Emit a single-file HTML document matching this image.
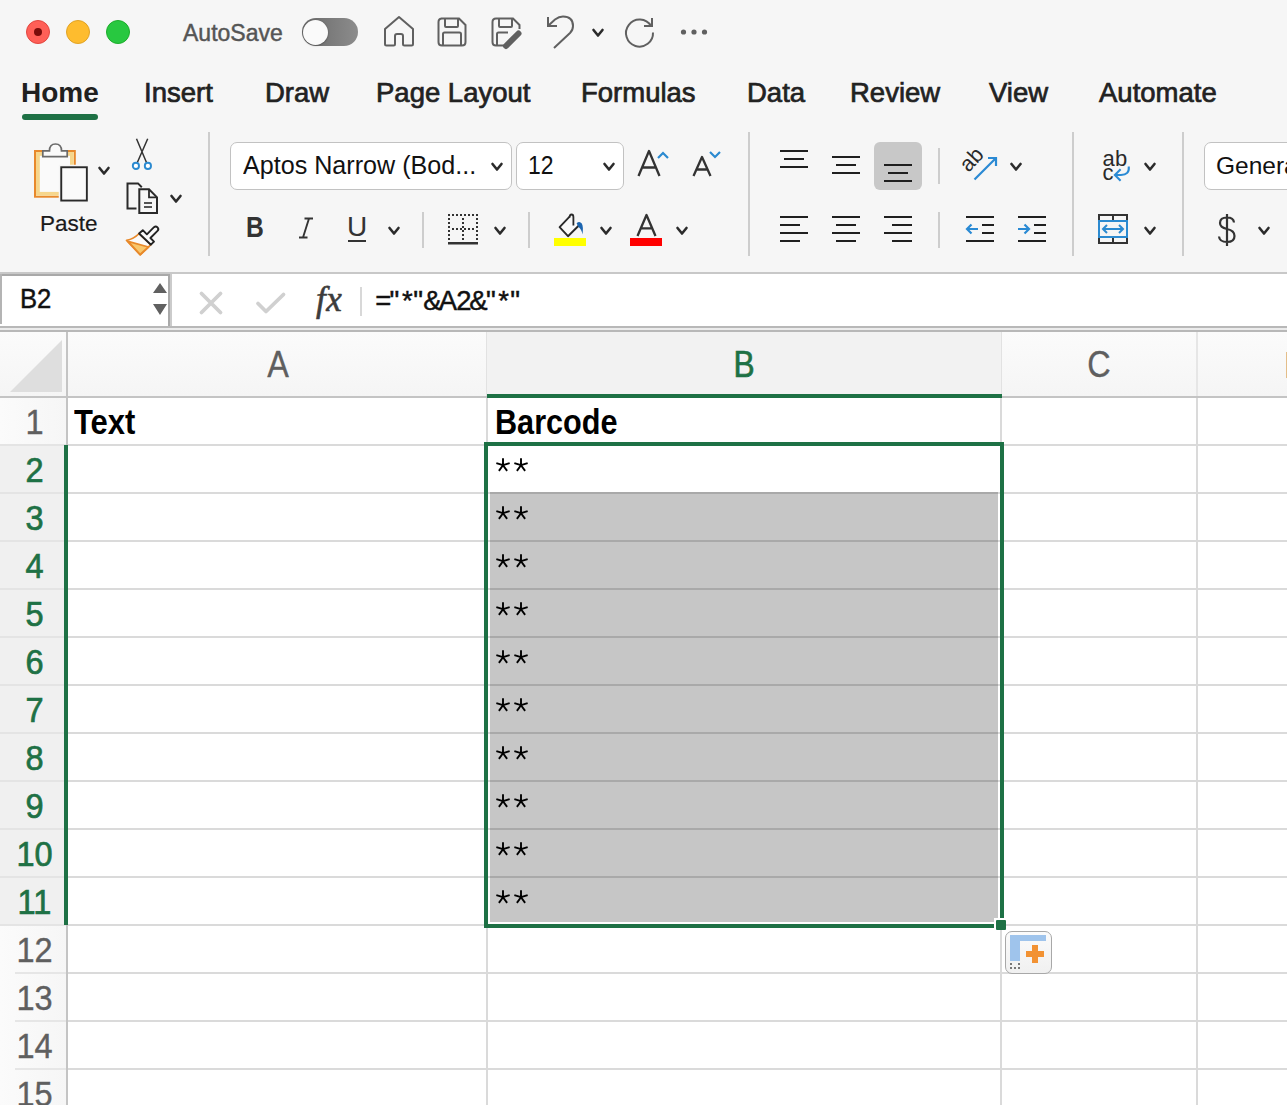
<!DOCTYPE html>
<html><head><meta charset="utf-8">
<style>
*{box-sizing:border-box}
html,body{margin:0;padding:0}
body{width:1287px;height:1105px;overflow:hidden;position:relative;background:#f6f6f6;font-family:"Liberation Sans",sans-serif}
.a{position:absolute}
.t{position:absolute;line-height:1;white-space:nowrap}
.m{-webkit-text-stroke:0.45px currentColor}
.tab{-webkit-text-stroke:0.7px currentColor}
.hl{position:absolute;height:2px;background:#dadada}
.vl{position:absolute;width:2px;background:#dadada}
.rn{position:absolute;left:0;width:69px;text-align:center;font-size:35px;line-height:1;color:#5f5f5f;transform:scaleX(.93);-webkit-text-stroke:0.4px #5f5f5f}
.rn.g{color:#1e7145;-webkit-text-stroke:0.7px #1e7145}
.ast{position:absolute;left:495px;font-size:30px;line-height:1;color:#111}
</style></head>
<body>
<!-- ============ TITLE BAR ============ -->
<div class="a" style="left:26px;top:20px;width:24px;height:24px;border-radius:50%;background:#ff5f57;border:1px solid #e2463f"></div>
<div class="a" style="left:34px;top:28px;width:8px;height:8px;border-radius:50%;background:#7a0c0a"></div>
<div class="a" style="left:66px;top:20px;width:24px;height:24px;border-radius:50%;background:#febc2e;border:1px solid #e1a325"></div>
<div class="a" style="left:106px;top:20px;width:24px;height:24px;border-radius:50%;background:#28c840;border:1px solid #1dad2b"></div>
<div class="t m" style="left:183px;top:22px;font-size:23px;color:#555">AutoSave</div>
<div class="a" style="left:302px;top:18px;width:56px;height:28px;border-radius:14px;background:linear-gradient(90deg,#6a6a6a,#8c8c8c)"></div>
<div class="a" style="left:303px;top:20px;width:25px;height:25px;border-radius:50%;background:#fafafa;box-shadow:0 0.5px 2px rgba(0,0,0,.4)"></div>

<!-- ============ TABS ============ -->
<div class="t" style="left:21px;top:79px;font-size:28px;font-weight:bold;color:#202020">Home</div>
<div class="a" style="left:22px;top:114px;width:76px;height:6px;border-radius:3px;background:#1e7145"></div>
<div class="t tab" style="left:144px;top:79px;font-size:27.5px;color:#222">Insert</div>
<div class="t tab" style="left:265px;top:79px;font-size:27.5px;color:#222">Draw</div>
<div class="t tab" style="left:376px;top:79px;font-size:27.5px;color:#222">Page Layout</div>
<div class="t tab" style="left:581px;top:79px;font-size:27.5px;color:#222">Formulas</div>
<div class="t tab" style="left:747px;top:79px;font-size:27.5px;color:#222">Data</div>
<div class="t tab" style="left:850px;top:79px;font-size:27.5px;color:#222">Review</div>
<div class="t tab" style="left:989px;top:79px;font-size:27.5px;color:#222">View</div>
<div class="t tab" style="left:1099px;top:79px;font-size:27.5px;color:#222">Automate</div>

<!-- ============ RIBBON ============ -->
<!-- Paste -->
<svg class="a" style="left:30px;top:138px" width="64" height="68" viewBox="0 0 64 68">
  <rect x="5" y="13" width="39.8" height="45.7" fill="#fafafa" stroke="#e8892c" stroke-width="2"/>
  <rect x="7.9" y="15.9" width="34" height="39.9" fill="none" stroke="#f6d68c" stroke-width="3.8"/>
  <path d="M12.8 18.7 V12.8 H19.5 Q19.5 6 25.5 6 Q31.5 6 31.5 12.8 H37.2 V18.7 Z" fill="#fafafa" stroke="#6b6b6b" stroke-width="1.7"/>
  <rect x="31.25" y="29.25" width="25.6" height="33.3" fill="#fafafa" stroke="#f5f5f5" stroke-width="5"/>
  <rect x="31.25" y="29.25" width="25.6" height="33.3" fill="#fafafa" stroke="#2a2a2a" stroke-width="1.9"/>
</svg>
<svg class="a" style="left:96px;top:164px" width="16" height="14"><path d="M3.5 4 L8 9.5 L12.5 4" fill="none" stroke="#2b2b2b" stroke-width="2.6" stroke-linecap="round" stroke-linejoin="round"/></svg>
<div class="t" style="left:40px;top:213px;font-size:22.5px;color:#1a1a1a;-webkit-text-stroke:0.2px #1a1a1a">Paste</div>
<!-- scissors -->
<svg class="a" style="left:128px;top:136px" width="28" height="36" viewBox="0 0 28 36">
  <path d="M8.5 2.8 L18.6 26.8 M19.7 2.8 L9.2 26.8" stroke="#333" stroke-width="1.5" fill="none"/>
  <circle cx="7.9" cy="29.9" r="3.1" fill="#fff" stroke="#2b8ad0" stroke-width="1.9"/>
  <circle cx="19.9" cy="29.9" r="3.1" fill="#fff" stroke="#2b8ad0" stroke-width="1.9"/>
</svg>
<!-- copy -->
<svg class="a" style="left:124px;top:180px" width="38" height="38" viewBox="0 0 38 38">
  <path d="M12.5 28.5 H3.5 V3.4 H14 L17.8 7.2" fill="none" stroke="#2a2a2a" stroke-width="2"/>
  <path d="M15.3 9.3 H25 L33 17.3 V32.9 H15.3 Z" fill="#f7f7f7" stroke="#2a2a2a" stroke-width="2"/>
  <path d="M25 9.3 V17.3 H33" fill="none" stroke="#2a2a2a" stroke-width="1.8"/>
  <path d="M20 23 H28 M20 27 H28" stroke="#555" stroke-width="1.8"/>
</svg>
<svg class="a" style="left:168px;top:192px" width="16" height="14"><path d="M3.5 4 L8 9.5 L12.5 4" fill="none" stroke="#2b2b2b" stroke-width="2.6" stroke-linecap="round" stroke-linejoin="round"/></svg>
<!-- format painter -->
<svg class="a" style="left:124px;top:224px" width="38" height="34" viewBox="0 0 38 34">
  <path d="M2.6 16.4 Q10 14.8 15.1 9.5 L26.9 20.7 L16.2 30.8 Z" fill="#fafafa" stroke="#e8892a" stroke-width="1.8" stroke-linejoin="round"/>
  <path d="M4 17.4 L24.5 23 L16.2 30.5 Z" fill="#f8c76c" stroke="#e8892a" stroke-width="1.8" stroke-linejoin="round"/>
  <path d="M15.1 9.5 L18.8 6.2 L22.9 10.3 L30 3.2 Q31.8 1.6 33.5 3.4 Q35.2 5.2 33.5 6.9 L26.4 14 L30 17.6 L26.9 20.7 Z" fill="#fafafa" stroke="#222" stroke-width="1.9" stroke-linejoin="round"/>
</svg>
<!-- separators -->
<div class="a" style="left:208px;top:132px;width:2px;height:124px;background:#cdcdcd"></div>
<div class="a" style="left:748px;top:132px;width:2px;height:124px;background:#cdcdcd"></div>
<div class="a" style="left:1072px;top:132px;width:2px;height:124px;background:#cdcdcd"></div>
<div class="a" style="left:1182px;top:132px;width:2px;height:124px;background:#cdcdcd"></div>
<div class="a" style="left:422px;top:212px;width:2px;height:36px;background:#cdcdcd"></div>
<div class="a" style="left:528px;top:212px;width:2px;height:36px;background:#cdcdcd"></div>
<div class="a" style="left:938px;top:148px;width:2px;height:36px;background:#cdcdcd"></div>
<div class="a" style="left:938px;top:212px;width:2px;height:36px;background:#cdcdcd"></div>

<!-- font name / size -->
<div class="a" style="left:230px;top:142px;width:282px;height:48px;border:1px solid #c2c2c2;border-radius:7px;background:#fff"></div>
<div class="t" style="left:243px;top:153px;font-size:25.5px;color:#111;transform:scaleX(.985);transform-origin:0 0">Aptos Narrow (Bod...</div>
<svg class="a" style="left:489px;top:160px" width="16" height="14"><path d="M3.5 4 L8 9.5 L12.5 4" fill="none" stroke="#2b2b2b" stroke-width="2.6" stroke-linecap="round" stroke-linejoin="round"/></svg>
<div class="a" style="left:516px;top:142px;width:108px;height:48px;border:1px solid #c2c2c2;border-radius:7px;background:#fff"></div>
<div class="t" style="left:528px;top:153px;font-size:25.5px;color:#111;transform:scaleX(.9);transform-origin:0 0">12</div>
<svg class="a" style="left:601px;top:160px" width="16" height="14"><path d="M3.5 4 L8 9.5 L12.5 4" fill="none" stroke="#2b2b2b" stroke-width="2.6" stroke-linecap="round" stroke-linejoin="round"/></svg>
<!-- grow/shrink font -->
<svg class="a" style="left:634px;top:146px" width="30" height="34"><path d="M4.5 30 L15 5 L25.5 30 M8 21.5 H22" fill="none" stroke="#333" stroke-width="2.3" stroke-linejoin="round"/></svg>
<svg class="a" style="left:656px;top:149px" width="14" height="12"><path d="M2 9 L7 4 L12 9" fill="none" stroke="#2b8ad0" stroke-width="2.2"/></svg>
<svg class="a" style="left:690px;top:152px" width="24" height="28"><path d="M3.5 24 L12 5 L20.5 24 M6.3 17.5 H17.7" fill="none" stroke="#333" stroke-width="2.3" stroke-linejoin="round"/></svg>
<svg class="a" style="left:708px;top:148px" width="14" height="12"><path d="M2 4 L7 9 L12 4" fill="none" stroke="#2b8ad0" stroke-width="2.2"/></svg>

<!-- B I U -->
<div class="t" style="left:246px;top:213px;font-size:29px;font-weight:bold;color:#333;transform:scaleX(.85);transform-origin:0 0">B</div>
<svg class="a" style="left:296px;top:215px" width="20" height="26"><path d="M13 3.5 L7 22.5 M8.5 3.5 H17 M3 22.5 H11.5" fill="none" stroke="#333" stroke-width="1.9"/></svg>
<div class="t" style="left:347px;top:213px;font-size:28px;color:#333">U</div>
<div class="a" style="left:348px;top:240px;width:18px;height:2px;background:#333"></div>
<svg class="a" style="left:386px;top:224px" width="16" height="14"><path d="M3.5 4 L8 9.5 L12.5 4" fill="none" stroke="#2b2b2b" stroke-width="2.6" stroke-linecap="round" stroke-linejoin="round"/></svg>
<!-- borders -->
<svg class="a" style="left:446px;top:212px" width="34" height="34" viewBox="0 0 34 34">
  <g fill="#333">
    <rect x="2" y="2" width="2" height="2"/><rect x="6" y="2" width="2" height="2"/><rect x="10" y="2" width="2" height="2"/><rect x="14" y="2" width="2" height="2"/><rect x="18" y="2" width="2" height="2"/><rect x="22" y="2" width="2" height="2"/><rect x="26" y="2" width="2" height="2"/><rect x="30" y="2" width="2" height="2"/>
    <rect x="2" y="6" width="2" height="2"/><rect x="2" y="10" width="2" height="2"/><rect x="2" y="14" width="2" height="2"/><rect x="2" y="18" width="2" height="2"/><rect x="2" y="22" width="2" height="2"/><rect x="2" y="26" width="2" height="2"/>
    <rect x="30" y="6" width="2" height="2"/><rect x="30" y="10" width="2" height="2"/><rect x="30" y="14" width="2" height="2"/><rect x="30" y="18" width="2" height="2"/><rect x="30" y="22" width="2" height="2"/><rect x="30" y="26" width="2" height="2"/>
    <rect x="16" y="6" width="2" height="2"/><rect x="16" y="10" width="2" height="2"/><rect x="16" y="14" width="2" height="2"/><rect x="16" y="18" width="2" height="2"/><rect x="16" y="22" width="2" height="2"/><rect x="16" y="26" width="2" height="2"/>
    <rect x="6" y="16" width="2" height="2"/><rect x="10" y="16" width="2" height="2"/><rect x="14" y="16" width="2" height="2"/><rect x="18" y="16" width="2" height="2"/><rect x="22" y="16" width="2" height="2"/><rect x="26" y="16" width="2" height="2"/>
    <rect x="2" y="30" width="30" height="2.5"/>
  </g>
</svg>
<svg class="a" style="left:492px;top:224px" width="16" height="14"><path d="M3.5 4 L8 9.5 L12.5 4" fill="none" stroke="#2b2b2b" stroke-width="2.6" stroke-linecap="round" stroke-linejoin="round"/></svg>
<!-- fill color -->
<svg class="a" style="left:552px;top:210px" width="38" height="38" viewBox="0 0 38 38">
  <path d="M17.6 6.6 L7.6 17.2 L16 26.2 L26.6 15.8" fill="#fafafa" stroke="#2a2a2a" stroke-width="1.9" stroke-linejoin="round"/>
  <path d="M17.6 7.5 Q17.6 4.5 19.6 4.5 Q21.4 4.5 21.4 7 V15.5" fill="none" stroke="#2a2a2a" stroke-width="1.8"/>
  <path d="M24.6 13.2 Q27.5 10.5 29.8 13.5 Q31.5 16 30.5 24.5 Q29.5 19 26.5 17 Z" fill="#1c65b0"/>
  <rect x="2" y="28" width="32" height="8" fill="#ffff00"/>
</svg>
<svg class="a" style="left:598px;top:224px" width="16" height="14"><path d="M3.5 4 L8 9.5 L12.5 4" fill="none" stroke="#2b2b2b" stroke-width="2.6" stroke-linecap="round" stroke-linejoin="round"/></svg>
<!-- font color -->
<svg class="a" style="left:634px;top:211px" width="26" height="28"><path d="M3.5 25 L12.5 4 L21.5 25 M6.8 17.3 H18.2" fill="none" stroke="#333" stroke-width="2.3" stroke-linejoin="round"/></svg>
<div class="a" style="left:630px;top:238px;width:32px;height:8px;background:#f00"></div>
<svg class="a" style="left:674px;top:224px" width="16" height="14"><path d="M3.5 4 L8 9.5 L12.5 4" fill="none" stroke="#2b2b2b" stroke-width="2.6" stroke-linecap="round" stroke-linejoin="round"/></svg>

<!-- alignment row 1 -->
<div class="a" style="left:780px;top:150px;width:28px;height:2px;background:#1f1f1f"></div>
<div class="a" style="left:784px;top:158px;width:20px;height:2px;background:#1f1f1f"></div>
<div class="a" style="left:780px;top:166px;width:28px;height:2px;background:#1f1f1f"></div>
<div class="a" style="left:832px;top:156px;width:28px;height:2px;background:#1f1f1f"></div>
<div class="a" style="left:836px;top:164px;width:20px;height:2px;background:#1f1f1f"></div>
<div class="a" style="left:832px;top:172px;width:28px;height:2px;background:#1f1f1f"></div>
<div class="a" style="left:874px;top:142px;width:48px;height:48px;border-radius:6px;background:#c8c8c8"></div>
<div class="a" style="left:884px;top:164px;width:28px;height:2px;background:#1f1f1f"></div>
<div class="a" style="left:888px;top:172px;width:20px;height:2px;background:#1f1f1f"></div>
<div class="a" style="left:884px;top:180px;width:28px;height:2px;background:#1f1f1f"></div>
<!-- orientation -->
<svg class="a" style="left:960px;top:148px" width="40" height="34" viewBox="0 0 40 34">
  <text x="0" y="0" font-family="Liberation Sans" font-size="21.5" fill="#2a2a2a" transform="translate(8.5 25) rotate(-47)">ab</text>
  <path d="M14.5 31.5 L36 10 M28 10 H36 V18" fill="none" stroke="#2a8ad4" stroke-width="2.2"/>
</svg>
<svg class="a" style="left:1008px;top:160px" width="16" height="14"><path d="M3.5 4 L8 9.5 L12.5 4" fill="none" stroke="#2b2b2b" stroke-width="2.6" stroke-linecap="round" stroke-linejoin="round"/></svg>
<!-- alignment row 2 -->
<div class="a" style="left:780px;top:216px;width:28px;height:2px;background:#1f1f1f"></div>
<div class="a" style="left:780px;top:224px;width:20px;height:2px;background:#1f1f1f"></div>
<div class="a" style="left:780px;top:232px;width:28px;height:2px;background:#1f1f1f"></div>
<div class="a" style="left:780px;top:240px;width:20px;height:2px;background:#1f1f1f"></div>
<div class="a" style="left:832px;top:216px;width:28px;height:2px;background:#1f1f1f"></div>
<div class="a" style="left:836px;top:224px;width:20px;height:2px;background:#1f1f1f"></div>
<div class="a" style="left:832px;top:232px;width:28px;height:2px;background:#1f1f1f"></div>
<div class="a" style="left:836px;top:240px;width:20px;height:2px;background:#1f1f1f"></div>
<div class="a" style="left:884px;top:216px;width:28px;height:2px;background:#1f1f1f"></div>
<div class="a" style="left:892px;top:224px;width:20px;height:2px;background:#1f1f1f"></div>
<div class="a" style="left:884px;top:232px;width:28px;height:2px;background:#1f1f1f"></div>
<div class="a" style="left:892px;top:240px;width:20px;height:2px;background:#1f1f1f"></div>
<!-- indent -->
<div class="a" style="left:966px;top:216px;width:28px;height:2px;background:#1f1f1f"></div>
<div class="a" style="left:982px;top:224px;width:12px;height:2px;background:#1f1f1f"></div>
<div class="a" style="left:982px;top:232px;width:12px;height:2px;background:#1f1f1f"></div>
<div class="a" style="left:966px;top:240px;width:28px;height:2px;background:#1f1f1f"></div>
<svg class="a" style="left:964px;top:222px" width="18" height="14"><path d="M3 7 H14 M7.5 2.5 L3 7 L7.5 11.5" fill="none" stroke="#2a8ad4" stroke-width="2.2"/></svg>
<div class="a" style="left:1018px;top:216px;width:28px;height:2px;background:#1f1f1f"></div>
<div class="a" style="left:1034px;top:224px;width:12px;height:2px;background:#1f1f1f"></div>
<div class="a" style="left:1034px;top:232px;width:12px;height:2px;background:#1f1f1f"></div>
<div class="a" style="left:1018px;top:240px;width:28px;height:2px;background:#1f1f1f"></div>
<svg class="a" style="left:1016px;top:222px" width="18" height="14"><path d="M2 7 H13 M8.5 2.5 L13 7 L8.5 11.5" fill="none" stroke="#2a8ad4" stroke-width="2.2"/></svg>
<!-- wrap text -->
<svg class="a" style="left:1098px;top:148px" width="38" height="38" viewBox="0 0 38 38">
  <text x="4.6" y="18" font-family="Liberation Sans" font-size="22" fill="#2a2a2a">a</text>
  <text x="17" y="18" font-family="Liberation Sans" font-size="22" fill="#2a2a2a">b</text>
  <text x="4.6" y="32" font-family="Liberation Sans" font-size="22" fill="#2a2a2a">c</text>
  <path d="M30.8 18.5 Q31.5 27 23 27 H17.5 M22.6 21.3 L16.9 27 L22.6 32.7" fill="none" stroke="#2a8ad4" stroke-width="2.1"/>
</svg>
<svg class="a" style="left:1142px;top:160px" width="16" height="14"><path d="M3.5 4 L8 9.5 L12.5 4" fill="none" stroke="#2b2b2b" stroke-width="2.6" stroke-linecap="round" stroke-linejoin="round"/></svg>
<!-- merge -->
<svg class="a" style="left:1096px;top:212px" width="34" height="34" viewBox="0 0 34 34">
  <rect x="3" y="3" width="28" height="28" fill="none" stroke="#333" stroke-width="2"/>
  <path d="M17 3 V9 M17 25 V31" stroke="#333" stroke-width="2"/>
  <rect x="3" y="9" width="28" height="16" fill="#f5f5f5" stroke="#2b8ad0" stroke-width="2"/>
  <path d="M7 17 H27 M11 13 L7 17 L11 21 M23 13 L27 17 L23 21" fill="none" stroke="#2b8ad0" stroke-width="2"/>
</svg>
<svg class="a" style="left:1142px;top:224px" width="16" height="14"><path d="M3.5 4 L8 9.5 L12.5 4" fill="none" stroke="#2b2b2b" stroke-width="2.6" stroke-linecap="round" stroke-linejoin="round"/></svg>
<!-- number format -->
<div class="a" style="left:1204px;top:142px;width:110px;height:48px;border:1px solid #c2c2c2;border-radius:7px;background:#fff"></div>
<div class="t" style="left:1216px;top:154px;font-size:24.5px;color:#111">General</div>
<svg class="a" style="left:1216px;top:212px" width="22" height="36"><path d="M18 10.5 Q17.5 5.5 11 5.5 Q4 5.5 4 11 Q4 15.5 11 17 Q18.5 18.5 18.5 24 Q18.5 30 11 30 Q3.5 30 3 24.5 M11 2 V34" fill="none" stroke="#333" stroke-width="2.2"/></svg>
<svg class="a" style="left:1256px;top:224px" width="16" height="14"><path d="M3.5 4 L8 9.5 L12.5 4" fill="none" stroke="#2b2b2b" stroke-width="2.6" stroke-linecap="round" stroke-linejoin="round"/></svg>

<!-- quick access icons -->
<svg class="a" style="left:382px;top:14px" width="34" height="34" viewBox="0 0 34 34">
  <path d="M3 15 L17 3 L31 15 V30 Q31 31.5 29.5 31.5 H22.5 Q21 31.5 21 30 V22 Q21 20 19 20 H15 Q13 20 13 22 V30 Q13 31.5 11.5 31.5 H4.5 Q3 31.5 3 30 Z" fill="none" stroke="#606060" stroke-width="2" stroke-linejoin="round"/>
</svg>
<svg class="a" style="left:436px;top:16px" width="32" height="32" viewBox="0 0 32 32">
  <path d="M5 2.5 H23 L29.5 9 V26 Q29.5 29.5 26 29.5 H6 Q2.5 29.5 2.5 26 V6 Q2.5 2.5 6 2.5 Z" fill="none" stroke="#606060" stroke-width="2"/>
  <path d="M9 3 V10 Q9 11 10 11 H21 Q22 11 22 10 V3" fill="none" stroke="#606060" stroke-width="2"/>
  <path d="M7 29 V18 Q7 16.5 8.5 16.5 H23.5 Q25 16.5 25 18 V29" fill="none" stroke="#606060" stroke-width="2"/>
</svg>
<svg class="a" style="left:490px;top:16px" width="34" height="34" viewBox="0 0 34 34">
  <path d="M14 29.5 H6 Q2.5 29.5 2.5 26 V6 Q2.5 2.5 6 2.5 H23 L29.5 9 V13" fill="none" stroke="#606060" stroke-width="2"/>
  <path d="M9 3 V10 Q9 11 10 11 H21 Q22 11 22 10 V3" fill="none" stroke="#606060" stroke-width="2"/>
  <path d="M7 29 V18 Q7 16.5 8.5 16.5 H18" fill="none" stroke="#606060" stroke-width="2"/>
  <path d="M16 30 L28.5 17.5" stroke="#606060" stroke-width="6" stroke-linecap="round"/>
</svg>
<svg class="a" style="left:544px;top:14px" width="34" height="36" viewBox="0 0 34 36">
  <path d="M4 3 V12 H13" fill="none" stroke="#606060" stroke-width="2"/>
  <path d="M4.5 11.5 L11 5.5 Q15 2.5 19 2.5 Q29 2.5 29 12 Q29 16 26 19 L10 34" fill="none" stroke="#606060" stroke-width="2"/>
</svg>
<svg class="a" style="left:590px;top:26px" width="16" height="14"><path d="M3.5 4 L8 9.5 L12.5 4" fill="none" stroke="#2b2b2b" stroke-width="2.6" stroke-linecap="round" stroke-linejoin="round"/></svg>
<svg class="a" style="left:622px;top:14px" width="36" height="36" viewBox="0 0 36 36">
  <path d="M29 12 A13.5 13.5 0 1 0 31 18.5" fill="none" stroke="#606060" stroke-width="2"/>
  <path d="M30 4 V12 H22" fill="none" stroke="#606060" stroke-width="2"/>
</svg>
<svg class="a" style="left:678px;top:26px" width="32" height="12"><circle cx="5.5" cy="6" r="2.6" fill="#606060"/><circle cx="16" cy="6" r="2.6" fill="#606060"/><circle cx="26.5" cy="6" r="2.6" fill="#606060"/></svg>


<!-- ============ FORMULA BAR ============ -->
<div class="a" style="left:0;top:272px;width:1287px;height:2px;background:#c8c8c8"></div>
<div class="a" style="left:0;top:274px;width:1287px;height:52px;background:#fff"></div>
<div class="a" style="left:0;top:274px;width:170px;height:2px;background:#a9a9a9"></div>
<div class="a" style="left:0;top:274px;width:2px;height:50px;background:#b4b4b4"></div>
<div class="a" style="left:168px;top:274px;width:2px;height:52px;background:#a9a9a9"></div>
<div class="a" style="left:170px;top:274px;width:2px;height:52px;background:#cbcbcb"></div>
<div class="t m" style="left:19.5px;top:286px;font-size:27px;color:#111;transform:scaleX(.95);transform-origin:0 0">B2</div>
<svg class="a" style="left:150px;top:280px" width="20" height="40"><path d="M3 13 L10 3 L17 13 Z M3 24 L10 35 L17 24 Z" fill="#606060"/></svg>
<svg class="a" style="left:196px;top:288px" width="30" height="30"><path d="M5.5 5.5 L24.5 24.5 M24.5 5.5 L5.5 24.5" stroke="#d0d0d0" stroke-width="3.8" stroke-linecap="round"/></svg>
<svg class="a" style="left:254px;top:288px" width="34" height="30"><path d="M4 15.5 L12 23.5 L29.5 6.5" stroke="#d0d0d0" stroke-width="3.8" fill="none" stroke-linecap="round" stroke-linejoin="round"/></svg>
<div class="t" style="left:316px;top:282px;font-size:35px;letter-spacing:0.5px;font-family:'Liberation Serif',serif;font-style:italic;color:#3c3c3c;-webkit-text-stroke:0.6px #3c3c3c">fx</div>
<div class="a" style="left:360px;top:287px;width:2px;height:29px;background:#d8d8d8"></div>
<div class="t m" style="left:371.4px;top:287px;width:24px;text-align:center;font-size:27.5px;color:#111">=</div>
<div class="t m" style="left:382.5px;top:287px;width:24px;text-align:center;font-size:27.5px;color:#111">"</div>
<div class="t m" style="left:395.3px;top:287px;width:24px;text-align:center;font-size:27.5px;color:#111">*</div>
<div class="t m" style="left:406.2px;top:287px;width:24px;text-align:center;font-size:27.5px;color:#111">"</div>
<div class="t m" style="left:420.5px;top:287px;width:24px;text-align:center;font-size:27.5px;color:#111">&amp;</div>
<div class="t m" style="left:436.0px;top:287px;width:24px;text-align:center;font-size:27.5px;color:#111">A</div>
<div class="t m" style="left:451.8px;top:287px;width:24px;text-align:center;font-size:27.5px;color:#111">2</div>
<div class="t m" style="left:466.5px;top:287px;width:24px;text-align:center;font-size:27.5px;color:#111">&amp;</div>
<div class="t m" style="left:479.0px;top:287px;width:24px;text-align:center;font-size:27.5px;color:#111">"</div>
<div class="t m" style="left:491.6px;top:287px;width:24px;text-align:center;font-size:27.5px;color:#111">*</div>
<div class="t m" style="left:503.2px;top:287px;width:24px;text-align:center;font-size:27.5px;color:#111">"</div>
<div class="a" style="left:0;top:326px;width:1287px;height:2px;background:#b8b8b8"></div>
<div class="a" style="left:0;top:328px;width:1287px;height:2px;background:#ececec"></div>
<div class="a" style="left:0;top:330px;width:1287px;height:2px;background:#b8b8b8"></div>

<!-- ============ GRID ============ -->
<div class="a" style="left:0;top:332px;width:1287px;height:773px;background:#fff"></div>
<!-- column header -->
<div class="a" style="left:0;top:332px;width:1287px;height:64px;background:linear-gradient(#fbfbfb,#f5f5f5)"></div>
<div class="a" style="left:487px;top:332px;width:514px;height:64px;background:#f2f2f2"></div>
<svg class="a" style="left:8px;top:338px" width="56" height="56"><path d="M54 2 L54 54 L2 54 Z" fill="#dedede"/></svg>
<!-- row header -->
<div class="a" style="left:0;top:397px;width:66px;height:708px;background:linear-gradient(90deg,#fbfbfb,#f6f6f6)"></div>
<div class="a" style="left:0;top:445px;width:66px;height:480px;background:#f0f0f0"></div>

<!-- header lines -->
<div class="a" style="left:0;top:396px;width:1287px;height:2px;background:#c4c4c4"></div>
<div class="a" style="left:66px;top:332px;width:2px;height:773px;background:#c4c4c4"></div>

<!-- gridlines horizontal -->
<div class="hl" style="left:68px;top:444px;width:1219px"></div>
<div class="hl" style="left:68px;top:492px;width:1219px"></div>
<div class="hl" style="left:68px;top:540px;width:1219px"></div>
<div class="hl" style="left:68px;top:588px;width:1219px"></div>
<div class="hl" style="left:68px;top:636px;width:1219px"></div>
<div class="hl" style="left:68px;top:684px;width:1219px"></div>
<div class="hl" style="left:68px;top:732px;width:1219px"></div>
<div class="hl" style="left:68px;top:780px;width:1219px"></div>
<div class="hl" style="left:68px;top:828px;width:1219px"></div>
<div class="hl" style="left:68px;top:876px;width:1219px"></div>
<div class="hl" style="left:68px;top:924px;width:1219px"></div>
<div class="hl" style="left:68px;top:972px;width:1219px"></div>
<div class="hl" style="left:68px;top:1020px;width:1219px"></div>
<div class="hl" style="left:68px;top:1068px;width:1219px"></div>
<!-- row header separators -->
<div class="hl" style="left:0;top:444px;width:66px;background:#e4e4e4"></div>
<div class="hl" style="left:0;top:492px;width:66px;background:#e4e4e4"></div>
<div class="hl" style="left:0;top:540px;width:66px;background:#e4e4e4"></div>
<div class="hl" style="left:0;top:588px;width:66px;background:#e4e4e4"></div>
<div class="hl" style="left:0;top:636px;width:66px;background:#e4e4e4"></div>
<div class="hl" style="left:0;top:684px;width:66px;background:#e4e4e4"></div>
<div class="hl" style="left:0;top:732px;width:66px;background:#e4e4e4"></div>
<div class="hl" style="left:0;top:780px;width:66px;background:#e4e4e4"></div>
<div class="hl" style="left:0;top:828px;width:66px;background:#e4e4e4"></div>
<div class="hl" style="left:0;top:876px;width:66px;background:#e4e4e4"></div>
<div class="hl" style="left:0;top:924px;width:66px;background:#e4e4e4"></div>
<div class="hl" style="left:15px;top:972px;width:51px;background:#e6e6e6"></div>
<div class="hl" style="left:15px;top:1020px;width:51px;background:#e6e6e6"></div>
<div class="hl" style="left:15px;top:1068px;width:51px;background:#e6e6e6"></div>
<!-- gridlines vertical -->
<div class="vl" style="left:486px;top:398px;height:707px"></div>
<div class="vl" style="left:1000px;top:398px;height:707px"></div>
<div class="vl" style="left:1196px;top:398px;height:707px"></div>
<div class="vl" style="left:486px;top:332px;height:64px;width:1px;background:#e2e2e2"></div>
<div class="vl" style="left:1001px;top:332px;height:64px;width:1px;background:#e2e2e2"></div>
<div class="vl" style="left:1196px;top:332px;height:64px;width:2px;background:#e6e6e6"></div>

<!-- column header letters -->
<div class="t" style="left:228px;top:347px;width:100px;text-align:center;font-size:36px;color:#5f5f5f;transform:scaleX(.9);-webkit-text-stroke:0.3px #5f5f5f">A</div>
<div class="t" style="left:694px;top:347px;width:100px;text-align:center;font-size:36px;color:#1e7145;transform:scaleX(.88);-webkit-text-stroke:0.7px #1e7145">B</div>
<div class="t" style="left:1049px;top:347px;width:100px;text-align:center;font-size:36px;color:#5f5f5f;transform:scaleX(.9);-webkit-text-stroke:0.3px #5f5f5f">C</div>
<div class="t" style="left:1284px;top:348px;font-size:36px;color:#5f5f5f;transform:scaleX(.9);transform-origin:0 0">D</div>
<div class="a" style="left:487px;top:394px;width:515px;height:4px;background:#1e7145"></div>

<!-- row numbers -->
<div class="rn" style="top:404px">1</div>
<div class="rn g" style="top:452px">2</div>
<div class="rn g" style="top:500px">3</div>
<div class="rn g" style="top:548px">4</div>
<div class="rn g" style="top:596px">5</div>
<div class="rn g" style="top:644px">6</div>
<div class="rn g" style="top:692px">7</div>
<div class="rn g" style="top:740px">8</div>
<div class="rn g" style="top:788px">9</div>
<div class="rn g" style="top:836px">10</div>
<div class="rn g" style="top:884px">11</div>
<div class="rn" style="top:932px">12</div>
<div class="rn" style="top:980px">13</div>
<div class="rn" style="top:1028px">14</div>
<div class="rn" style="top:1076px">15</div>

<!-- selection fill -->
<div class="a" style="left:490px;top:492px;width:508px;height:430px;background:#c6c6c6"></div>
<div class="hl" style="left:490px;top:540px;width:508px;background:#a9a9a9"></div>
<div class="hl" style="left:490px;top:588px;width:508px;background:#a9a9a9"></div>
<div class="hl" style="left:490px;top:636px;width:508px;background:#a9a9a9"></div>
<div class="hl" style="left:490px;top:684px;width:508px;background:#a9a9a9"></div>
<div class="hl" style="left:490px;top:732px;width:508px;background:#a9a9a9"></div>
<div class="hl" style="left:490px;top:780px;width:508px;background:#a9a9a9"></div>
<div class="hl" style="left:490px;top:828px;width:508px;background:#a9a9a9"></div>
<div class="hl" style="left:490px;top:876px;width:508px;background:#a9a9a9"></div>
<div class="hl" style="left:490px;top:492px;width:508px;background:#a9a9a9"></div>

<!-- cell text -->
<div class="t" style="left:74px;top:404px;font-size:35px;font-weight:bold;color:#000;transform:scaleX(.885);transform-origin:0 0">Text</div>
<div class="t" style="left:495px;top:404px;font-size:35px;font-weight:bold;color:#000;transform:scaleX(.875);transform-origin:0 0">Barcode</div>

<svg class="a" style="left:0;top:0" width="1287" height="1105"><path d="M503.00 465.20 L503.00 458.20 M503.00 465.20 L509.66 463.04 M503.00 465.20 L507.11 470.86 M503.00 465.20 L498.89 470.86 M503.00 465.20 L496.34 463.04 M521.00 465.20 L521.00 458.20 M521.00 465.20 L527.66 463.04 M521.00 465.20 L525.11 470.86 M521.00 465.20 L516.89 470.86 M521.00 465.20 L514.34 463.04 M503.00 513.20 L503.00 506.20 M503.00 513.20 L509.66 511.04 M503.00 513.20 L507.11 518.86 M503.00 513.20 L498.89 518.86 M503.00 513.20 L496.34 511.04 M521.00 513.20 L521.00 506.20 M521.00 513.20 L527.66 511.04 M521.00 513.20 L525.11 518.86 M521.00 513.20 L516.89 518.86 M521.00 513.20 L514.34 511.04 M503.00 561.20 L503.00 554.20 M503.00 561.20 L509.66 559.04 M503.00 561.20 L507.11 566.86 M503.00 561.20 L498.89 566.86 M503.00 561.20 L496.34 559.04 M521.00 561.20 L521.00 554.20 M521.00 561.20 L527.66 559.04 M521.00 561.20 L525.11 566.86 M521.00 561.20 L516.89 566.86 M521.00 561.20 L514.34 559.04 M503.00 609.20 L503.00 602.20 M503.00 609.20 L509.66 607.04 M503.00 609.20 L507.11 614.86 M503.00 609.20 L498.89 614.86 M503.00 609.20 L496.34 607.04 M521.00 609.20 L521.00 602.20 M521.00 609.20 L527.66 607.04 M521.00 609.20 L525.11 614.86 M521.00 609.20 L516.89 614.86 M521.00 609.20 L514.34 607.04 M503.00 657.20 L503.00 650.20 M503.00 657.20 L509.66 655.04 M503.00 657.20 L507.11 662.86 M503.00 657.20 L498.89 662.86 M503.00 657.20 L496.34 655.04 M521.00 657.20 L521.00 650.20 M521.00 657.20 L527.66 655.04 M521.00 657.20 L525.11 662.86 M521.00 657.20 L516.89 662.86 M521.00 657.20 L514.34 655.04 M503.00 705.20 L503.00 698.20 M503.00 705.20 L509.66 703.04 M503.00 705.20 L507.11 710.86 M503.00 705.20 L498.89 710.86 M503.00 705.20 L496.34 703.04 M521.00 705.20 L521.00 698.20 M521.00 705.20 L527.66 703.04 M521.00 705.20 L525.11 710.86 M521.00 705.20 L516.89 710.86 M521.00 705.20 L514.34 703.04 M503.00 753.20 L503.00 746.20 M503.00 753.20 L509.66 751.04 M503.00 753.20 L507.11 758.86 M503.00 753.20 L498.89 758.86 M503.00 753.20 L496.34 751.04 M521.00 753.20 L521.00 746.20 M521.00 753.20 L527.66 751.04 M521.00 753.20 L525.11 758.86 M521.00 753.20 L516.89 758.86 M521.00 753.20 L514.34 751.04 M503.00 801.20 L503.00 794.20 M503.00 801.20 L509.66 799.04 M503.00 801.20 L507.11 806.86 M503.00 801.20 L498.89 806.86 M503.00 801.20 L496.34 799.04 M521.00 801.20 L521.00 794.20 M521.00 801.20 L527.66 799.04 M521.00 801.20 L525.11 806.86 M521.00 801.20 L516.89 806.86 M521.00 801.20 L514.34 799.04 M503.00 849.20 L503.00 842.20 M503.00 849.20 L509.66 847.04 M503.00 849.20 L507.11 854.86 M503.00 849.20 L498.89 854.86 M503.00 849.20 L496.34 847.04 M521.00 849.20 L521.00 842.20 M521.00 849.20 L527.66 847.04 M521.00 849.20 L525.11 854.86 M521.00 849.20 L516.89 854.86 M521.00 849.20 L514.34 847.04 M503.00 897.20 L503.00 890.20 M503.00 897.20 L509.66 895.04 M503.00 897.20 L507.11 902.86 M503.00 897.20 L498.89 902.86 M503.00 897.20 L496.34 895.04 M521.00 897.20 L521.00 890.20 M521.00 897.20 L527.66 895.04 M521.00 897.20 L525.11 902.86 M521.00 897.20 L516.89 902.86 M521.00 897.20 L514.34 895.04 " stroke="#000" stroke-width="1.9" stroke-linecap="butt" fill="none"/></svg>
<!-- selection border -->
<div class="a" style="left:64px;top:445px;width:4px;height:480px;background:#1e7145"></div>
<div class="a" style="left:484px;top:442px;width:520px;height:4px;background:#1e7145"></div>
<div class="a" style="left:484px;top:442px;width:4px;height:486px;background:#1e7145"></div>
<div class="a" style="left:1000px;top:442px;width:4px;height:476px;background:#1e7145"></div>
<div class="a" style="left:484px;top:924px;width:510px;height:4px;background:#1e7145"></div>
<div class="a" style="left:994px;top:918px;width:12px;height:12px;background:#fff"></div>
<div class="a" style="left:996px;top:920px;width:10px;height:10px;border-radius:1px;background:#1e7145"></div>

<!-- quick analysis -->
<div class="a" style="left:1005px;top:931px;width:47px;height:43px;border-radius:7px;border:1.5px solid #a8a8a8;background:linear-gradient(#fbfbfb,#f0f0f0)"></div>
<div class="a" style="left:1010px;top:935px;width:36px;height:6px;background:#9fc4ec"></div>
<div class="a" style="left:1010px;top:935px;width:10px;height:26px;background:#9fc4ec"></div>
<div class="a" style="left:1032px;top:945px;width:6px;height:18px;background:#f29233"></div>
<div class="a" style="left:1026px;top:951px;width:18px;height:6px;background:#f29233"></div>
<svg class="a" style="left:1009px;top:962px" width="14" height="10"><g fill="#777"><rect x="1" y="1" width="2" height="2"/><rect x="9" y="1" width="2" height="2"/><rect x="1" y="5" width="2" height="2"/><rect x="5" y="5" width="2" height="2"/><rect x="9" y="5" width="2" height="2"/></g></svg>
</body></html>
